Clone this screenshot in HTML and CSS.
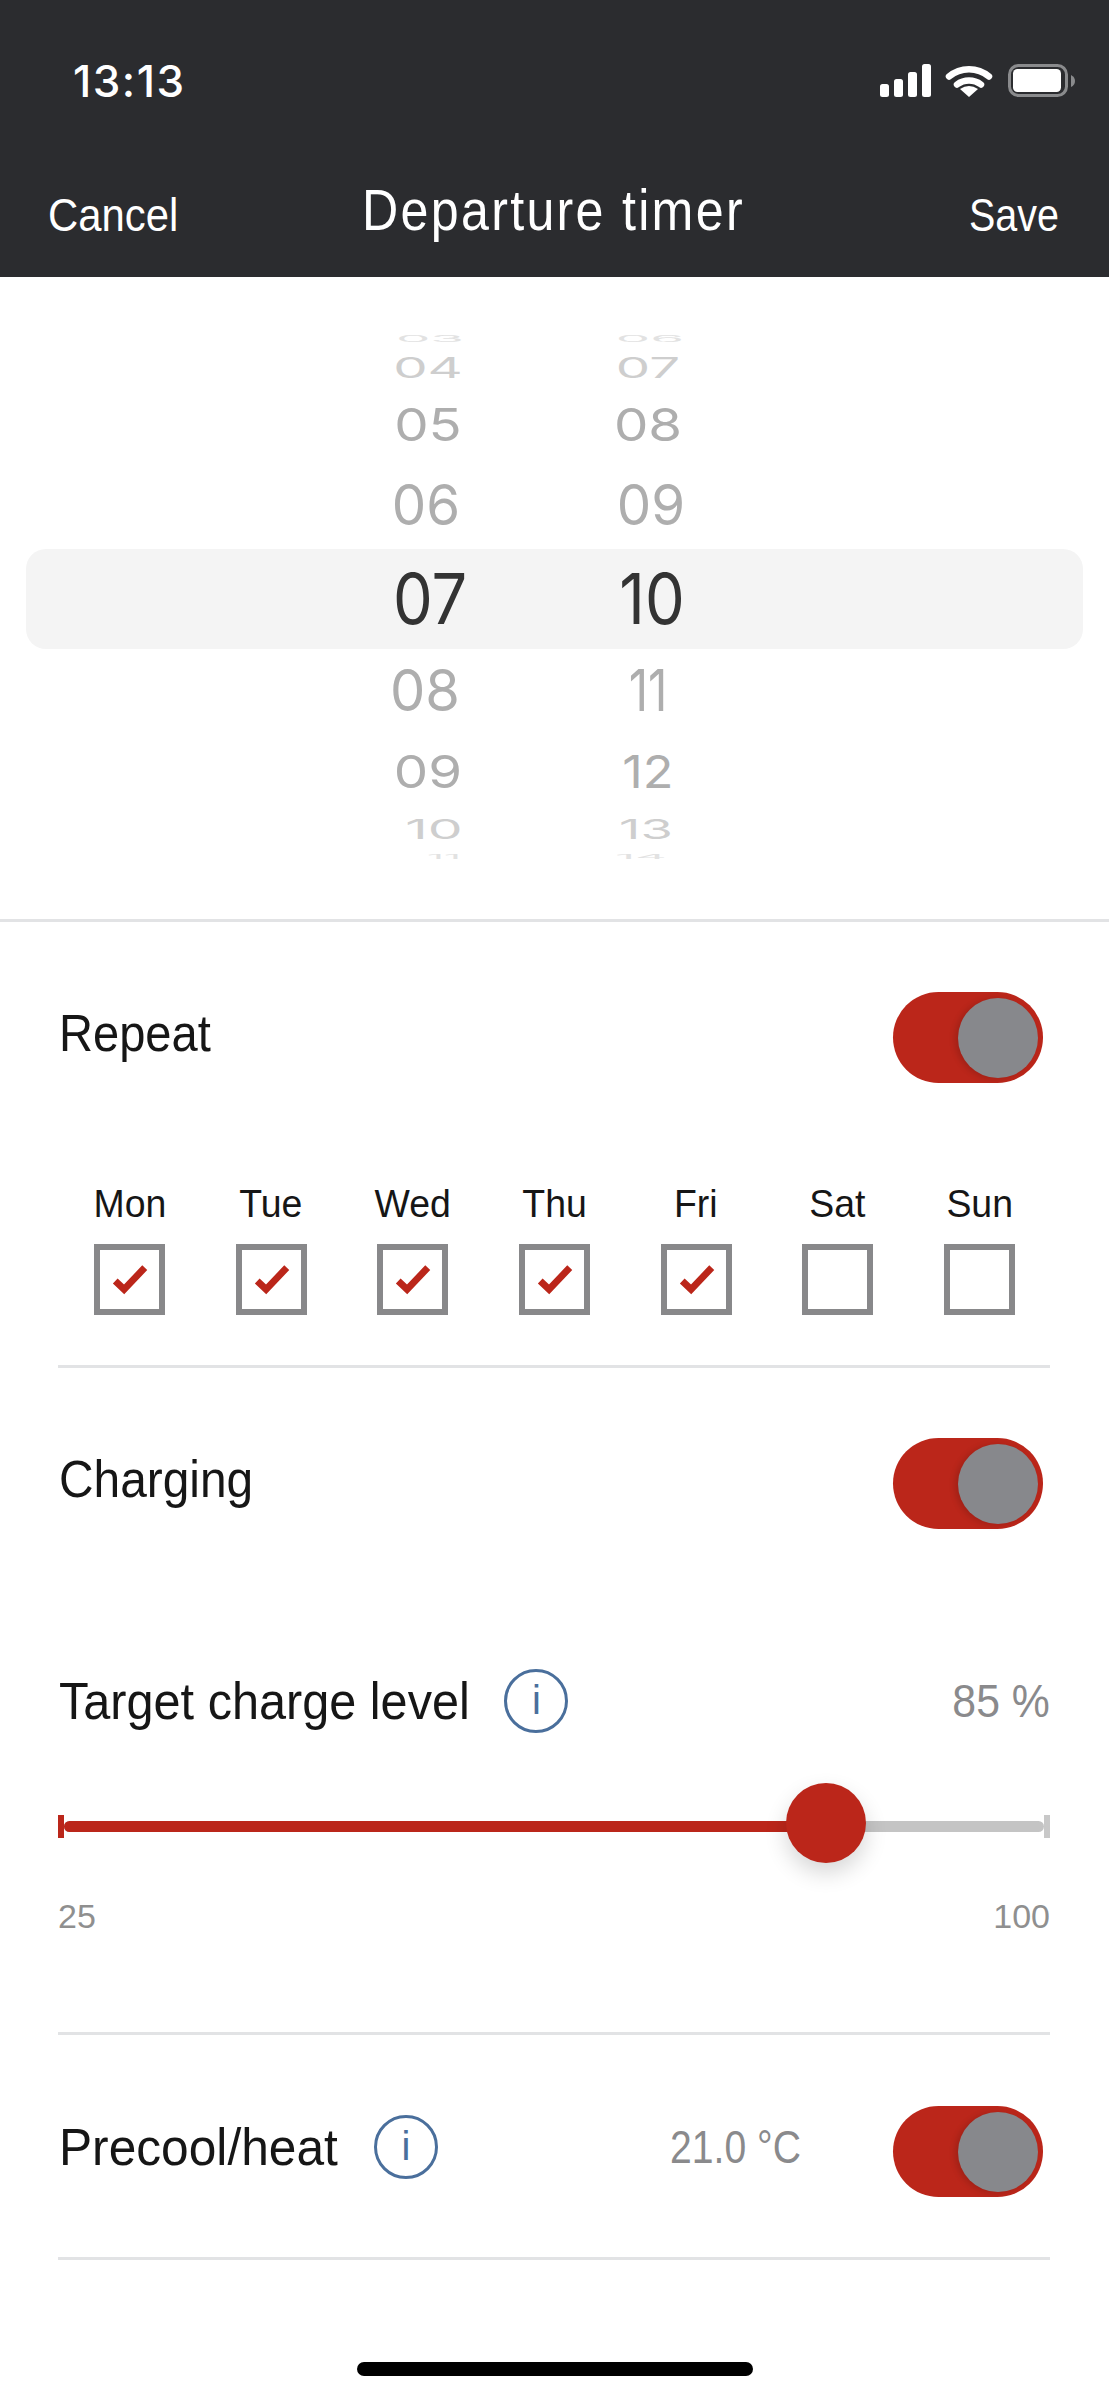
FILE: index.html
```html
<!DOCTYPE html>
<html lang="en">
<head>
    <meta charset="UTF-8">
    <meta name="viewport" content="width=device-width, initial-scale=1.0">
    <title>Departure timer</title>
    <link rel="stylesheet" href="styles.css">
</head>
<body>
    <header class="topbar">
        <div class="status">
            <span class="clock">13:13</span>
            <svg class="status-icons" width="195" height="33" viewBox="0 0 195 33">
                <rect x="0" y="20" width="9" height="13" rx="2.5" fill="#fff"/>
                <rect x="14" y="15" width="9" height="18" rx="2.5" fill="#fff"/>
                <rect x="28" y="8" width="9" height="25" rx="2.5" fill="#fff"/>
                <rect x="42" y="0" width="9" height="33" rx="2.5" fill="#fff"/>
                <path d="M69 12.5 A31 31 0 0 1 109 12.5" fill="none" stroke="#fff" stroke-width="6.5" stroke-linecap="round"/>
                <path d="M77 20.5 A20 20 0 0 1 101 20.5" fill="none" stroke="#fff" stroke-width="6.5" stroke-linecap="round"/>
                <path d="M89 33 L80 25 Q89 19 98 25 Z" fill="#fff"/>
                <rect x="129.5" y="1.5" width="57" height="30" rx="9" fill="none" stroke="#8a8b8d" stroke-width="3"/>
                <rect x="133" y="5" width="48" height="23" rx="4.5" fill="#fff"/>
                <path d="M191 11 Q195 13 195 17 Q195 21 191 23 Z" fill="#8a8b8d"/>
            </svg>
        </div>
        <nav class="navline">
            <a href="#" class="nav-link cancel">Cancel</a>
            <h1 class="nav-title">Departure timer</h1>
            <a href="#" class="nav-link save">Save</a>
        </nav>
    </header>

    <section class="picker">
        <div class="pick-row d4-top"><span>03</span><span>06</span></div>
        <div class="pick-row d3-top"><span>04</span><span>07</span></div>
        <div class="pick-row d2-top"><span>05</span><span>08</span></div>
        <div class="pick-row d1-top"><span>06</span><span>09</span></div>
        <div class="pick-row selected"><span>07</span><span>10</span></div>
        <div class="pick-row d1-bottom"><span>08</span><span>11</span></div>
        <div class="pick-row d2-bottom"><span>09</span><span>12</span></div>
        <div class="pick-row d3-bottom"><span>10</span><span>13</span></div>
        <div class="pick-row d4-bottom"><span>11</span><span>14</span></div>
    </section>

    <main class="settings">
        <div class="row toggle-row repeat-row">
            <span class="label">Repeat</span>
            <span class="toggle"><span class="knob"></span></span>
        </div>

        <div class="days">
            <div class="day"><span class="day-name">Mon</span><span class="box"><svg viewBox="0 0 60 60"><path d="M15.5 31.5 L24.5 40 L45.5 18"/></svg></span></div>
            <div class="day"><span class="day-name">Tue</span><span class="box"><svg viewBox="0 0 60 60"><path d="M15.5 31.5 L24.5 40 L45.5 18"/></svg></span></div>
            <div class="day"><span class="day-name">Wed</span><span class="box"><svg viewBox="0 0 60 60"><path d="M15.5 31.5 L24.5 40 L45.5 18"/></svg></span></div>
            <div class="day"><span class="day-name">Thu</span><span class="box"><svg viewBox="0 0 60 60"><path d="M15.5 31.5 L24.5 40 L45.5 18"/></svg></span></div>
            <div class="day"><span class="day-name">Fri</span><span class="box"><svg viewBox="0 0 60 60"><path d="M15.5 31.5 L24.5 40 L45.5 18"/></svg></span></div>
            <div class="day"><span class="day-name">Sat</span><span class="box"></span></div>
            <div class="day"><span class="day-name">Sun</span><span class="box"></span></div>
        </div>

        <div class="row toggle-row charging-row">
            <span class="label">Charging</span>
            <span class="toggle"><span class="knob"></span></span>
        </div>

        <div class="row target-row">
            <span class="label">Target charge level</span>
            <span class="info">i</span>
            <span class="value">85 %</span>
        </div>

        <div class="slider">
            <span class="tick tick-red"></span>
            <div class="track">
                <div class="track-fill" style="width: 80%"></div>
                <span class="thumb"></span>
            </div>
            <span class="tick"></span>
        </div>
        <div class="range-labels"><span>25</span><span>100</span></div>

        <div class="row toggle-row precool-row">
            <span class="label">Precool/heat</span>
            <span class="info">i</span>
            <span class="value temp">21.0 °C</span>
            <span class="toggle"><span class="knob"></span></span>
        </div>
    </main>

    <div class="home-bar"></div>
</body>
</html>
```

FILE: styles.css
```css
body {
    margin: 0;
    background-color: #fff;
    font-family: "Liberation Sans", Arial, sans-serif;
    color: #161616;
    width: 1109px;
    height: 2400px;
    overflow: hidden;
}

.topbar {
    background-color: #2b2c2f;
    color: #fff;
    height: 277px;
}
.status {
    display: flex;
    justify-content: space-between;
    align-items: center;
    height: 33px;
    padding: 64px 34px 0 73px;
}
.clock {
    font-family: Inter, sans-serif;
    font-weight: 500;
    font-size: 44px;
    letter-spacing: 1.5px;
}
.navline {
    display: grid;
    grid-template-columns: 1fr auto 1fr;
    align-items: center;
    height: 60px;
    margin-top: 80px;
    padding: 0 50px 0 48px;
}
.nav-link {
    color: #fff;
    text-decoration: none;
    font-size: 47px;
    margin-top: 9px;
}
.cancel {
    transform: scaleX(0.89);
    transform-origin: left center;
}
.save {
    text-align: right;
    transform: scaleX(0.84);
    transform-origin: right center;
}
.nav-title {
    margin: 0;
    font-weight: 400;
    font-size: 57px;
    letter-spacing: 2.6px;
    transform: scaleX(0.88);
}

.picker {
    height: 588px;
    padding-top: 54px;
    border-bottom: 3px solid #e2e3e5;
}
.pick-row {
    display: flex;
    align-items: center;
    padding-left: 318px;
    font-family: Inter, sans-serif;
    font-weight: 400;
    font-size: 70px;
    color: #aeaeae;
    overflow: hidden;
}
.pick-row span {
    width: 220px;
    text-align: center;
    line-height: 1;
}
.pick-row.selected {
    height: 100px;
    margin: 0 26px;
    padding-left: 292px;
    border-radius: 20px;
    background-color: #f4f4f4;
    color: #333;
}
.selected span { transform: translateX(2px) scale(0.9, 1); }
.selected span:last-child { transform: translateX(4px) scale(0.9, 1); }
.d4-top { height: 16px; opacity: 0.35; }
.d4-top span { transform: translateX(2px) scale(0.78, 0.12); }
.d3-top { height: 42px; opacity: 0.6; }
.d3-top span { transform: scale(0.78, 0.4); }
.d2-top { height: 71px; }
.d2-top span { transform: scale(0.78, 0.65); }
.d1-top { height: 89px; }
.d1-top span { transform: scale(0.78, 0.8); }
.d1-top span:first-child { transform: translateX(-2px) scale(0.78, 0.8); }
.d1-top span:last-child { transform: translateX(3px) scale(0.78, 0.8); }
.d1-bottom { height: 84px; }
.d1-bottom span { transform: scale(0.8, 0.82); }
.d1-bottom span:first-child { transform: translateX(-3px) scale(0.8, 0.82); }
.d1-bottom span:last-child { transform: scale(0.68, 0.82); }
.d2-bottom { height: 77px; }
.d2-bottom span { transform: scale(0.78, 0.65); }
.d2-bottom span:last-child { transform: scale(0.72, 0.65); }
.d3-bottom { height: 38px; opacity: 0.6; }
.d3-bottom span:first-child { transform: translateX(6px) scale(0.79, 0.39); }
.d3-bottom span:last-child { transform: translateX(-2px) scale(0.75, 0.39); }
.d4-bottom { height: 18px; opacity: 0.35; }
.d4-bottom span:first-child { transform: translateX(16px) scale(0.6, 0.08); }
.d4-bottom span:last-child { transform: translateX(-7px) scale(0.7, 0.08); }

.settings {
    padding: 0 59px 0 58px;
}
.row {
    display: flex;
    align-items: center;
}
.toggle-row > :not(.toggle) {
    margin-bottom: 10px;
}
.label {
    margin-left: 1px;
    font-size: 52px;
    transform: scaleX(0.92);
    transform-origin: left center;
}
.repeat-row .label {
    transform: scaleX(0.905);
}
.target-row .label {
    transform: scaleX(0.935);
}
.precool-row .label {
    transform: scaleX(0.955);
}
.value {
    margin-left: auto;
    font-size: 46px;
    color: #8a8a8c;
    transform: scaleX(0.93);
    transform-origin: right center;
}
.temp {
    margin-right: 92px;
    transform: scaleX(0.85);
}
.toggle {
    position: relative;
    flex: none;
    width: 150px;
    height: 91px;
    margin-left: auto;
    margin-right: 7px;
    border-radius: 46px;
    background-color: #bb261a;
}
.temp + .toggle {
    margin-left: 0;
}
.knob {
    position: absolute;
    top: 6px;
    right: 5px;
    width: 80px;
    height: 80px;
    border-radius: 50%;
    background-color: #87888c;
    box-shadow: -3px 1px 6px rgba(0, 0, 0, 0.15);
}
.repeat-row {
    height: 91px;
    margin-top: 70px;
}
.days {
    display: grid;
    grid-template-columns: repeat(7, 1fr);
    margin-top: 99px;
    padding: 0 0 50px 1px;
    border-bottom: 3px solid #e2e3e5;
}
.day {
    display: flex;
    flex-direction: column;
    align-items: center;
    gap: 18px;
    font-size: 39px;
    line-height: 44px;
}
.day-name {
    transform: scaleX(0.96);
}
.box {
    display: block;
    box-sizing: border-box;
    width: 71px;
    height: 71px;
    border: 6px solid #88888a;
}
.box svg {
    display: block;
    width: 59px;
    height: 59px;
    fill: none;
    stroke: #bb261a;
    stroke-width: 7;
}
.charging-row {
    height: 91px;
    margin-top: 70px;
}
.target-row {
    height: 64px;
    margin-top: 140px;
}
.info {
    box-sizing: border-box;
    flex: none;
    width: 64px;
    height: 64px;
    border: 3px solid #4a6f9c;
    border-radius: 50%;
    color: #4a6f9c;
    font-size: 40px;
    line-height: 57px;
    text-align: center;
}
.target-row .info {
    margin-left: 6px;
}
.precool-row .info {
    margin-left: 23px;
}
.slider {
    display: flex;
    align-items: center;
    box-sizing: border-box;
    height: 80px;
    margin-top: 50px;
    padding-top: 7px;
}
.tick {
    flex: none;
    width: 6px;
    height: 23px;
    background-color: #c8c8c8;
}
.tick-red {
    background-color: #bb261a;
}
.track {
    position: relative;
    flex: 1;
    height: 11px;
    border-radius: 6px;
    background-color: #c4c4c4;
}
.track-fill {
    height: 100%;
    border-radius: 6px;
    background-color: #bb261a;
}
.thumb {
    position: absolute;
    top: -38px;
    left: 722px;
    width: 80px;
    height: 80px;
    border-radius: 50%;
    background-color: #bb261a;
    box-shadow: 0 10px 22px rgba(0, 0, 0, 0.16);
}
.range-labels {
    display: flex;
    justify-content: space-between;
    margin-top: 33px;
    padding-bottom: 96px;
    border-bottom: 3px solid #e2e3e5;
    font-size: 34px;
    line-height: 40px;
    color: #8f8f8f;
}
.precool-row {
    height: 91px;
    margin-top: 71px;
    padding-bottom: 60px;
    border-bottom: 3px solid #e2e3e5;
}
.home-bar {
    width: 396px;
    height: 14px;
    margin: 102px auto 0;
    border-radius: 7px;
    background-color: #000;
}
```
